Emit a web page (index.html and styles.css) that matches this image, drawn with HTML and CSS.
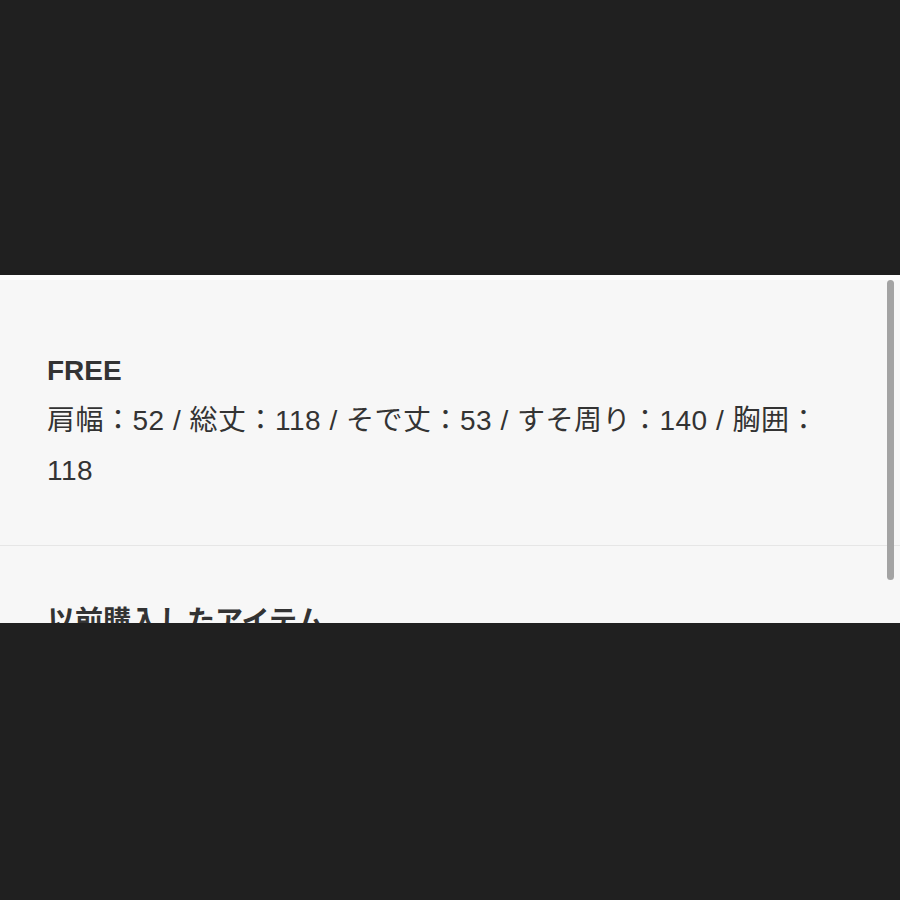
FILE: index.html
```html
<!DOCTYPE html>
<html lang="ja">
<head>
<meta charset="utf-8">
<title>Size</title>
<link rel="stylesheet" href="styles.css">
</head>
<body>
<div class="top-space"></div>
<section class="panel">
  <div class="size-block">
    <div class="size-name">FREE</div>
    <div class="size-detail">肩幅：52 / 総丈：118 / そで丈：53 / すそ周り：140 / 胸囲：118</div>
  </div>
  <div class="history">
    <h2 class="history-title">以前購入したアイテム</h2>
  </div>
  <div class="scrollbar"></div>
</section>
<div class="bottom-space"></div>
</body>
</html>
```

FILE: styles.css
```css
html, body {
  margin: 0;
  padding: 0;
  background: #202020;
}
body {
  font-family: "Liberation Sans", "Noto Sans CJK JP", sans-serif;
  color: #333333;
}
.top-space {
  height: 275px;
}
.panel {
  position: relative;
  height: 348px;
  overflow: hidden;
  background: #f7f7f7;
  border-top: 5px solid #ffffff;
  box-sizing: border-box;
}
.size-block {
  padding: 66px 47px 49px;
  border-bottom: 1px solid #e6e6e6;
}
.size-name {
  font-size: 28px;
  font-weight: 700;
  line-height: 50px;
}
.size-detail {
  font-size: 28px;
  line-height: 50px;
  letter-spacing: 0.5px;
}
.history {
  padding: 51px 47px 0;
}
.history-title {
  margin: 0;
  font-size: 28px;
  font-weight: 700;
  line-height: 50px;
}
.scrollbar {
  position: absolute;
  top: 0;
  right: 6px;
  width: 7px;
  height: 300px;
  border-radius: 4px;
  background: #a3a3a3;
}
.bottom-space {
  height: 277px;
}
```
